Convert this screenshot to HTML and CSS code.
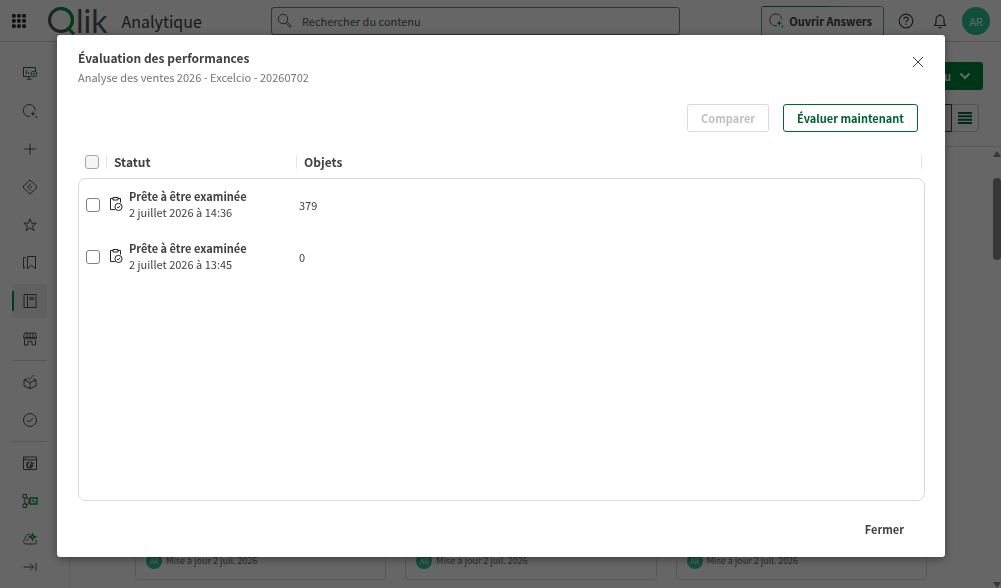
FILE: index.html
```html
<!DOCTYPE html>
<html lang="fr">
<head>
    <meta charset="utf-8">
    <title>Qlik Analytique</title>
    <link rel="stylesheet" href="styles.css">
</head>
<body>
    <div class="app">
        <header class="topbar">
            <div class="brand">
                <button class="icon-btn apps" aria-label="Applications">
                    <svg width="14" height="14" viewBox="0 0 14 14" fill="#303030">
                        <rect width="3.7" height="3.7" rx="1"/><rect x="5.1" width="3.7" height="3.7" rx="1"/><rect x="10.2" width="3.7" height="3.7" rx="1"/>
                        <rect y="5.1" width="3.7" height="3.7" rx="1"/><rect x="5.1" y="5.1" width="3.7" height="3.7" rx="1"/><rect x="10.2" y="5.1" width="3.7" height="3.7" rx="1"/>
                        <rect y="10.2" width="3.7" height="3.7" rx="1"/><rect x="5.1" y="10.2" width="3.7" height="3.7" rx="1"/><rect x="10.2" y="10.2" width="3.7" height="3.7" rx="1"/>
                    </svg>
                </button>
                <div class="logo">
                    <svg width="28" height="28" viewBox="0 0 28 28" fill="none" stroke-width="3">
                        <circle cx="13" cy="13" r="11.5" stroke="#54565b"/>
                        <path d="M7 3.2A11.5 11.5 0 0 1 20.5 21.7L26 27" stroke="#009845"/>
                    </svg>
                    <span class="logo-text">lik</span>
                </div>
                <span class="product">Analytique</span>
            </div>
            <label class="search">
                <svg width="16" height="16" viewBox="0 0 16 16" fill="none" stroke="#595959">
                    <circle cx="6" cy="6" r="4.7"/>
                    <path d="M9.3 10.3l1-1 4.3 4.2-1.2 1.2z"/>
                </svg>
                <input type="text" placeholder="Rechercher du contenu" aria-label="Rechercher du contenu">
            </label>
            <div class="tools">
                <button class="answers">
                    <svg width="15" height="15" viewBox="0 0 15 15" fill="none">
                        <path d="M8 12.8A6 6 0 1 1 12.8 6.5" stroke="#595959"/>
                        <path d="M10.3 7.3l.8 2 2 .8-2 .8-.8 2-.8-2-2-.8 2-.8z" fill="#009845"/>
                        <circle cx="13.3" cy="13.3" r="1.1" fill="#00c887"/>
                    </svg>
                    Ouvrir Answers
                </button>
                <button class="icon-btn" aria-label="Aide">
                    <svg width="16" height="16" viewBox="0 0 16 16" fill="none" stroke="#404040" stroke-width="1.2">
                        <circle cx="8" cy="8" r="6.8"/>
                        <path d="M5.8 6.3c0-3 4.4-2.8 4.4-.2 0 1.6-2.2 1.6-2.2 3.2M8 10.5v1.4"/>
                    </svg>
                </button>
                <button class="icon-btn" aria-label="Notifications">
                    <svg width="14" height="16" viewBox="0 0 14 16" fill="none" stroke="#404040" stroke-width="1.2">
                        <path d="M1.5 12.5L3 10V6.5a4 4 0 0 1 8 0V10l1.5 2.5zM7 1v1.5M5.5 14.6h3"/>
                    </svg>
                </button>
                <span class="avatar">AR</span>
            </div>
        </header>

        <div class="body">
            <nav class="sidebar">
                <a href="#" class="nav-item" aria-label="Accueil">
                    <svg width="16" height="16" viewBox="0 0 16 16"><path d="M9 11.5H1.5v-9h12V6M7 11.5V14M4.5 14.2h5M4.5 5.5V9M6.7 7v2"/><circle class="green" cx="12" cy="9" r="2.8"/><circle class="green" cx="12" cy="9" r=".6"/></svg>
                </a>
                <a href="#" class="nav-item" aria-label="Answers">
                    <svg width="16" height="16" viewBox="0 0 16 16"><path d="M8 13.5A6 6 0 1 1 13.3 7.5"/><path class="green-fill" d="M11 8l.8 2 2 .8-2 .8-.8 2-.8-2-2-.8 2-.8z"/><circle class="green-fill" cx="14.3" cy="14" r="1"/></svg>
                </a>
                <a href="#" class="nav-item" aria-label="Créer">
                    <svg width="16" height="16" viewBox="0 0 16 16"><path d="M8 2.5v11M2.5 8h11"/></svg>
                </a>
                <a href="#" class="nav-item" aria-label="Découvrir">
                    <svg width="16" height="16" viewBox="0 0 16 16"><path d="M7 1.7q1-.8 2 0L14.3 7q.8 1 0 2L9 14.3q-1 .8-2 0L1.7 9q-.8-1 0-2zM9 4.5L5.5 8 9 11.5M9.5 7l-1 1 1 1"/></svg>
                </a>
                <a href="#" class="nav-item" aria-label="Favoris">
                    <svg width="16" height="16" viewBox="0 0 16 16"><path d="M8 1.8l1.6 4.4h4.6l-3.7 2.8 1.4 4.6L8 10.8l-3.9 2.8L5.5 9 1.8 6.2h4.6z"/></svg>
                </a>
                <a href="#" class="nav-item" aria-label="Collections">
                    <svg width="16" height="16" viewBox="0 0 16 16"><path d="M5.5 1.5h8v12.3l-4-3.6-4 3.6zM3.5 2.5h-2v10.8l2-1.6"/></svg>
                </a>
                <a href="#" class="nav-item active" aria-label="Catalogue">
                    <svg width="16" height="16" viewBox="0 0 16 16"><path d="M2 1.5h12v13H2zM5.5 1.5v13M8 4.5h3.5v2H8z"/></svg>
                </a>
                <a href="#" class="nav-item" aria-label="Marketplace">
                    <svg width="16" height="16" viewBox="0 0 16 16"><path d="M2.5 2h11l1 4.5h-13zM1.5 6.5c0 2.3 3.2 2.3 3.2 0 0 2.3 3.3 2.3 3.3 0 0 2.3 3.3 2.3 3.3 0 0 2.3 3.2 2.3 3.2 0M5.3 2l-.6 4.5M8 2v4.5M10.7 2l.6 4.5M2.5 9v5H6v-3.5h4V14h3.5V9"/></svg>
                </a>
                <hr>
                <a href="#" class="nav-item" aria-label="Produits de données">
                    <svg width="16" height="16" viewBox="0 0 16 16"><path d="M5 4.7L2 6v6l6 2.7 6-2.7V6l-3-1.3M2 6l6 2.6L14 6M8 8.6v6"/><path class="green" d="M5.5 3.5l2 2 4-4.5"/></svg>
                </a>
                <a href="#" class="nav-item" aria-label="Qualité">
                    <svg width="16" height="16" viewBox="0 0 16 16"><circle cx="8" cy="8" r="6.5"/><path d="M5 8.2l2.2 2L11 6"/></svg>
                </a>
                <hr>
                <a href="#" class="nav-item" aria-label="Analyses">
                    <svg width="16" height="16" viewBox="0 0 16 16"><path d="M1.5 2h13v12.5h-13zM1.5 4.8h13M3 3.4h1"/><path stroke-width="1.5" d="M7.5 7.3a2.7 2.7 0 1 0 2.8 3H7.5"/><path class="green" stroke-width="1.5" d="M9.5 6.5v2h2.3"/></svg>
                </a>
                <a href="#" class="nav-item" aria-label="Automatisations">
                    <svg width="16" height="16" viewBox="0 0 16 16"><path d="M1 1.5h3.5V5H1zM1 11h3.5v3.5H1zM2.8 5v6M4.5 3.3L7 7.3v1.4l-2.5 4"/><path class="green" stroke-width="1.4" d="M8 5h7v6H8zM10 7l3 2.2"/></svg>
                </a>
                <a href="#" class="nav-item" aria-label="AutoML">
                    <svg width="16" height="16" viewBox="0 0 16 16"><path d="M8 3.2A5 5 0 0 0 3 8c-2.5 2-1.5 5 1 5h8.5c2.3 0 2.5-2.8 1-4.2M4.5 10l1.8-2.5"/><path class="green" stroke-width="1.4" d="M10.5 3l.9 2 2 .9-2 .9-.9 2-.9-2-2-.9 2-.9z"/></svg>
                </a>
                <button class="expand" aria-label="Développer">
                    <svg width="16" height="14" viewBox="0 0 16 14"><path d="M1.5 7h10M8 3.5L11.5 7 8 10.5M14 3v8"/></svg>
                </button>
            </nav>

            <main class="main">
                <div class="toolbar">
                    <button class="create">Créer nouveau
                        <svg width="12" height="8" viewBox="0 0 12 8" fill="none" stroke="#fff" stroke-width="2"><path d="M1.5 1.5L6 6l4.5-4.5"/></svg>
                    </button>
                    <div class="views">
                        <button class="view selected" aria-label="Vue grille"></button>
                        <button class="view" aria-label="Vue liste">
                            <svg width="14" height="12" viewBox="0 0 14 12" stroke="#006937" stroke-width="2"><path d="M0 1h14M0 4.3h14M0 7.7h14M0 11h14"/></svg>
                        </button>
                    </div>
                </div>
                <div class="content">
                    <div class="cards">
                        <article class="card"><span class="mini-avatar">AR</span>Mise à jour 2 juil. 2026</article>
                        <article class="card"><span class="mini-avatar">AR</span>Mise à jour 2 juil. 2026</article>
                        <article class="card"><span class="mini-avatar">AR</span>Mise à jour 2 juil. 2026</article>
                    </div>
                    <div class="scrollbar">
                        <span class="arrow-up"></span>
                        <span class="thumb"></span>
                        <span class="arrow-down"></span>
                    </div>
                </div>
            </main>
        </div>
    </div>

    <div class="overlay">
        <section class="modal" role="dialog" aria-labelledby="modalTitle">
            <header class="modal-header">
                <div>
                    <h1 id="modalTitle">Évaluation des performances</h1>
                    <p>Analyse des ventes 2026 - Excelcio - 20260702</p>
                </div>
                <button class="close" aria-label="Fermer la fenêtre">
                    <svg width="12" height="12" viewBox="0 0 12 12" stroke="#404040"><path d="M1 1l10 10M11 1L1 11"/></svg>
                </button>
            </header>

            <div class="actions">
                <button class="btn" disabled>Comparer</button>
                <button class="btn primary">Évaluer maintenant</button>
            </div>

            <table class="evals">
                <thead>
                    <tr>
                        <th><input type="checkbox" aria-label="Tout sélectionner" disabled></th>
                        <th>Statut</th>
                        <th>Objets</th>
                    </tr>
                </thead>
                <tbody>
                    <tr>
                        <td><input type="checkbox" aria-label="Sélectionner 14:36"></td>
                        <td class="status">
                            <svg width="14" height="16" viewBox="0 0 14 16" fill="none" stroke="#202020"><path d="M4 2.5H1.5v11.1H6M9 2.5h2.5v4M4 1.5h5v2.5H4z"/><circle cx="9.5" cy="10.9" r="3.6"/><path d="M8 10.9l1.2 1.1 2-2.2"/></svg>
                            <div><strong>Prête à être examinée</strong><span>2 juillet 2026 à 14:36</span></div>
                        </td>
                        <td>379</td>
                    </tr>
                    <tr>
                        <td><input type="checkbox" aria-label="Sélectionner 13:45"></td>
                        <td class="status">
                            <svg width="14" height="16" viewBox="0 0 14 16" fill="none" stroke="#202020"><path d="M4 2.5H1.5v11.1H6M9 2.5h2.5v4M4 1.5h5v2.5H4z"/><circle cx="9.5" cy="10.9" r="3.6"/><path d="M8 10.9l1.2 1.1 2-2.2"/></svg>
                            <div><strong>Prête à être examinée</strong><span>2 juillet 2026 à 13:45</span></div>
                        </td>
                        <td>0</td>
                    </tr>
                </tbody>
            </table>

            <footer class="modal-footer">
                <button class="btn-text">Fermer</button>
            </footer>
        </section>
    </div>
</body>
</html>
```

FILE: styles.css
```css
* {
    box-sizing: border-box;
}
body {
    margin: 0;
    overflow: hidden;
    background: #fff;
    color: #404040;
    font-family: "Noto Sans CJK SC", "Noto Sans", sans-serif;
    font-size: 11px;
    line-height: 16px;
}
button, input {
    font: inherit;
    color: inherit;
}
button {
    padding: 0;
    border: none;
    background: none;
    cursor: pointer;
}
svg {
    display: block;
    flex: none;
}

/* page behind the dialog */
.app {
    display: flex;
    flex-direction: column;
    height: 100vh;
}
.topbar {
    display: flex;
    align-items: center;
    flex: none;
    height: 42px;
    padding-right: 11px;
    border-bottom: 1px solid #d0d0d0;
}
.brand {
    display: flex;
    align-items: center;
    flex: none;
    width: 271px;
    padding-left: 7px;
}
.icon-btn {
    display: flex;
    align-items: center;
    justify-content: center;
    width: 24px;
    height: 24px;
}
.logo {
    display: flex;
    align-items: center;
    margin-left: 17px;
}
.logo-text {
    font-family: Lato, sans-serif;
    font-size: 32px;
    line-height: 28px;
    color: #54565b;
}
.product {
    margin-left: 14px;
    font-size: 16px;
    line-height: 24px;
}
.search {
    display: flex;
    align-items: center;
    gap: 9px;
    flex: 0 1 409px;
    height: 28px;
    padding: 0 5px;
    border: 1px solid #808080;
    border-radius: 3px;
}
.search input {
    flex: 1;
    min-width: 0;
    padding: 0;
    border: none;
    outline: none;
    background: none;
}
.search input::placeholder {
    color: #595959;
    opacity: 1;
}
.tools {
    display: flex;
    align-items: center;
    gap: 10px;
    margin-left: auto;
}
.answers {
    display: flex;
    align-items: center;
    gap: 5px;
    height: 30px;
    padding: 0 11px 0 7px;
    border: 1px solid #6f9f8b;
    border-radius: 3px;
    background: linear-gradient(90deg, #00873d 50%, #8a80b0 70%, #9a9a9a) 0 0 / 100% 1px no-repeat;
    background-origin: border-box;
    border-top-color: transparent;
    font-weight: bold;
}
.avatar {
    width: 28px;
    height: 28px;
    border-radius: 50%;
    background: #2cc69a;
    color: #fff;
    line-height: 28px;
    text-align: center;
}
.body {
    display: flex;
    flex: 1;
    min-height: 0;
}
.sidebar {
    display: flex;
    flex-direction: column;
    gap: 4px;
    flex: none;
    width: 70px;
    padding: 14px 22px 0 12px;
    border-right: 1px solid #e6e6e6;
}
.nav-item, .expand {
    display: flex;
    align-items: center;
    justify-content: center;
    flex: none;
    height: 34px;
    border-radius: 3px;
}
.expand {
    height: 14px;
}
.nav-item.active {
    background: linear-gradient(#009845, #009845) 0 50% / 2px 20px no-repeat #f0f0f0;
}
.sidebar svg {
    fill: none;
    stroke: #505050;
}
.sidebar .green {
    stroke: #009845;
}
.sidebar .green-fill {
    fill: #009845;
    stroke: none;
}
.sidebar hr {
    width: 100%;
    margin: 0;
    border: none;
    border-top: 1px solid #d9d9d9;
}
.main {
    display: flex;
    flex-direction: column;
    flex: 1;
    min-width: 0;
}
.toolbar {
    display: flex;
    flex-direction: column;
    align-items: flex-end;
    gap: 14px;
    flex: none;
    height: 105px;
    padding: 20px 18px 0;
    border-bottom: 1px solid #d9d9d9;
}
.create {
    display: flex;
    align-items: center;
    gap: 8px;
    height: 28px;
    padding: 0 12px;
    border-radius: 3px;
    background: #00873d;
    color: #fff;
    font-weight: bold;
}
.views {
    display: flex;
    margin-right: 4px;
}
.view {
    display: flex;
    align-items: center;
    justify-content: center;
    width: 27px;
    height: 28px;
    border: 1px solid #d0d0d0;
    border-left: none;
    border-radius: 0 3px 3px 0;
}
.view.selected {
    border: 1px solid #404040;
    border-radius: 3px 0 0 3px;
    background: #ebebeb;
}
.content {
    display: flex;
    flex: 1;
    min-height: 0;
}
.cards {
    display: grid;
    grid-template-columns: repeat(3, 1fr);
    gap: 19px;
    flex: 1;
    padding: 19px 66px 8px 65px;
}
.card {
    display: flex;
    align-items: flex-end;
    gap: 4px;
    padding: 0 10px 10px;
    border: 1px solid #d9d9d9;
    border-radius: 4px;
    color: #6e6e6e;
    font-size: 9px;
}
.mini-avatar {
    width: 16px;
    height: 16px;
    border-radius: 50%;
    background: #2cc69a;
    color: #fff;
    font-size: 7px;
    text-align: center;
}
.scrollbar {
    display: flex;
    flex-direction: column;
    flex: none;
    width: 8px;
    padding-top: 4px;
}
.arrow-up, .arrow-down {
    border: 4px solid transparent;
    border-top: none;
    border-bottom: 6px solid #8b8b8b;
}
.arrow-down {
    margin-top: auto;
    border-top: 6px solid #8b8b8b;
    border-bottom: none;
}
.thumb {
    height: 82px;
    margin-top: 21px;
    border-radius: 4px;
    background: #8b8b8b;
}

/* dialog */
.overlay {
    position: fixed;
    inset: 0;
    display: flex;
    padding: 35px 56px 31px 57px;
    background: rgba(0, 0, 0, 0.6);
}
.modal {
    display: flex;
    flex-direction: column;
    flex: 1;
    padding: 12px 20px 0 21px;
    border-radius: 3px;
    background: #fff;
    box-shadow: 0 2px 10px rgba(0, 0, 0, 0.4);
}
.modal-header {
    display: flex;
    justify-content: space-between;
    align-items: center;
}
.modal-header h1 {
    margin: 0;
    font-size: 12px;
    line-height: 22px;
}
.modal-header p {
    margin: 0;
    color: #737373;
}
.close {
    padding: 0 1px 8px;
}
.actions {
    display: flex;
    justify-content: flex-end;
    gap: 14px;
    margin: 19px 7px 13px 0;
}
.btn {
    height: 28px;
    padding: 0 13px;
    border: 1px solid #d9d9d9;
    border-radius: 3px;
    font-weight: bold;
}
.btn:disabled {
    color: #bfbfbf;
    cursor: default;
}
.btn.primary {
    border-color: #006937;
    color: #00602f;
}
.evals {
    display: flex;
    flex-direction: column;
    flex: 1;
}
.evals tbody {
    display: block;
    flex: 1;
    border: 1px solid #d9d9d9;
    border-radius: 8px;
}
.evals tr {
    display: grid;
    grid-template-columns: 28px 190px 1fr;
    align-items: center;
    height: 52px;
}
.evals thead tr {
    height: 33px;
    padding-right: 3px;
}
.evals th, .evals td {
    padding: 0 2px;
    text-align: left;
}
.evals th {
    height: 14px;
    padding: 0 7px;
    border-left: 1px solid #e6e6e6;
    font-size: 12px;
    line-height: 14px;
}
.evals th:first-child, .evals td:first-child {
    padding: 0 0 0 7px;
    border: none;
}
.evals th:last-child {
    border-right: 1px solid #e6e6e6;
}
.evals input {
    display: block;
    appearance: none;
    width: 14px;
    height: 14px;
    margin: 0;
    border: 1px solid #808080;
    border-radius: 3px;
    background: #fff;
}
.evals input:disabled {
    border-color: #a6a6a6;
    background: #f5f5f5;
}
.evals .status {
    display: flex;
    align-items: center;
    gap: 6px;
    padding-bottom: 2px;
}
.status strong, .status span {
    display: block;
}
.modal-footer {
    display: flex;
    align-items: center;
    justify-content: flex-end;
    height: 56px;
    padding-right: 21px;
}
.btn-text {
    font-weight: bold;
}
```
